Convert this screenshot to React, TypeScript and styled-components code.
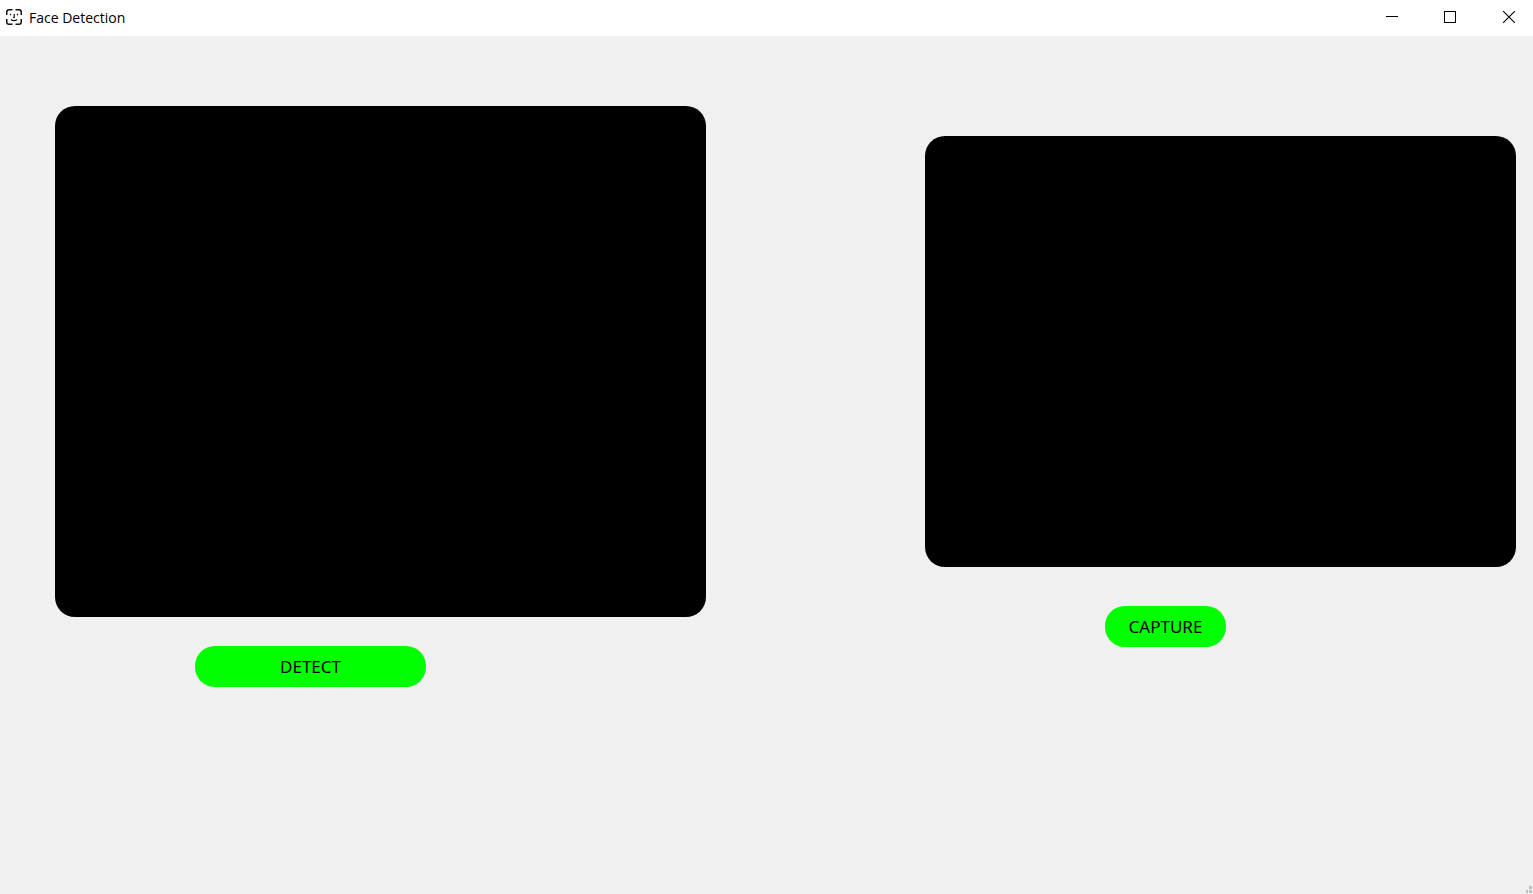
import React from "react";
import styled, { createGlobalStyle } from "styled-components";

const GlobalStyle = createGlobalStyle`
  * { box-sizing: border-box; }
  body { margin: 0; background: #f0f0f0; }
`;

const Window = styled.div`
  position: relative;
  display: flex;
  flex-direction: column;
  min-height: 100vh;
  background: #f0f0f0;
  color: #000;
  font-family: "Noto Sans", sans-serif;
`;

const TitleBar = styled.header`
  display: flex;
  align-items: center;
  height: 36px;
  padding-left: 6px;
  background: #fff;
`;

const AppIcon = styled.svg`
  flex: none;
  width: 16px;
  height: 16px;
  margin: 0 7px 2px 0;
`;

const Title = styled.h1`
  flex: 1;
  margin: 0;
  font-family: "Open Sans", sans-serif;
  font-size: 14px;
  line-height: 20px;
  font-weight: 400;
`;

const WindowButton = styled.button`
  display: flex;
  align-items: center;
  justify-content: center;
  width: 58px;
  height: 36px;
  padding: 0 0 2px;
  border: 0;
  background: transparent;
  color: #000;

  &:last-child {
    width: 54px;
    padding-left: 6px;
  }
`;

const Glyph = styled.svg`
  flex: none;
  width: 12px;
  height: 12px;
`;

const Workspace = styled.main`
  display: grid;
  grid-template-columns: 651fr 591fr;
  column-gap: 219px;
  align-items: start;
  padding: 70px 17px 24px 55px;
`;

const Pane = styled.section<{ $top: number; $gap: number }>`
  display: flex;
  flex-direction: column;
  align-items: flex-start;
  gap: ${(p) => p.$gap}px;
  padding-top: ${(p) => p.$top}px;
`;

const Screen = styled.div<{ $height: number }>`
  width: 100%;
  height: ${(p) => p.$height}px;
  border-radius: 20px;
  background: #000;
`;

const ActionButton = styled.button<{ $width: number; $indent: number }>`
  width: ${(p) => p.$width}px;
  height: 41px;
  margin-left: ${(p) => p.$indent}px;
  padding: 0;
  border: 0;
  border-radius: 20px;
  background: #00ff00;
  color: #000;
  font-family: inherit;
  font-size: 17px;
  line-height: 24px;
`;

const ResizeGrip = styled.svg`
  position: absolute;
  right: 1px;
  bottom: 1px;
  width: 6px;
  height: 7px;
`;

export default function App() {
  return (
    <>
      <GlobalStyle />
      <Window>
        <TitleBar>
          <AppIcon viewBox="0 0 16 16" fill="none" stroke="#111" strokeWidth="1.5" aria-hidden="true">
            <path d="M.75 6V3Q.75.75 3 .75H6.5M9.5 .75H13Q15.25.75 15.25 3V6M15.25 10V13Q15.25 15.25 13 15.25H9.5M6.5 15.25H3Q.75 15.25.75 13V10" />
            <path d="M4.5 4.8V6.3M11.5 4.8V6.3" strokeWidth="1.3" />
            <path d="M8.2 5V8.5H7M4.9 10.6Q8 12.8 11.1 10.6" strokeWidth="1.2" />
          </AppIcon>
          <Title>Face Detection</Title>
          <WindowButton type="button" aria-label="Minimize">
            <Glyph viewBox="0 0 12 12" shapeRendering="crispEdges">
              <rect y="5" width="12" height="1" />
            </Glyph>
          </WindowButton>
          <WindowButton type="button" aria-label="Maximize">
            <Glyph viewBox="0 0 12 12" fill="none" stroke="currentColor">
              <rect x=".5" y=".5" width="11" height="11" />
            </Glyph>
          </WindowButton>
          <WindowButton type="button" aria-label="Close">
            <Glyph viewBox="0 0 12 12" stroke="currentColor" strokeWidth="1.1">
              <path d="M0 0L12 12M12 0L0 12" />
            </Glyph>
          </WindowButton>
        </TitleBar>
        <Workspace>
          <Pane $top={0} $gap={29}>
            <Screen $height={511} />
            <ActionButton type="button" $width={231} $indent={140}>DETECT</ActionButton>
          </Pane>
          <Pane $top={30} $gap={39}>
            <Screen $height={431} />
            <ActionButton type="button" $width={121} $indent={180}>CAPTURE</ActionButton>
          </Pane>
        </Workspace>
        <ResizeGrip viewBox="0 0 6 7" fill="#bfbfbf" shapeRendering="crispEdges" aria-hidden="true">
          <rect x="3" y="0" width="3" height="3" />
          <rect x="0" y="4" width="2" height="3" />
          <rect x="3" y="4" width="3" height="3" />
        </ResizeGrip>
      </Window>
    </>
  );
}
